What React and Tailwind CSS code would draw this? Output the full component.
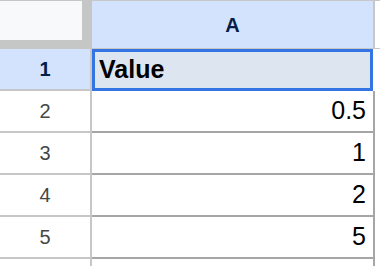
import React from "react";

const rows = [
  { n: "1", v: "Value", sel: true },
  { n: "2", v: "0.5" },
  { n: "3", v: "1" },
  { n: "4", v: "2" },
  { n: "5", v: "5" },
  { n: "", v: "" },
];

export default function App() {
  return (
    <div className="w-[380px] h-[266px] overflow-hidden bg-white font-['Liberation_Sans',Arial,sans-serif]">
      <div className="flex h-[49px]">
        <div className="w-[92px] h-[49px] bg-[#c4c7c5] shrink-0">
          <div className="w-[82px] h-[39px] mt-[1px] bg-[#f8f9fa]" />
        </div>
        <div className="w-[283px] h-[49px] shrink-0 border-t border-b border-r-2 border-[#c7c7c7] bg-[#d3e3fd] flex items-center justify-center text-[20px] font-bold text-[#041e49]">
          A
        </div>
        <div className="flex-1 h-[49px] border-t border-b border-[#c7c7c7] bg-white" />
      </div>
      {rows.map((r, i) => (
        <div key={i} className="flex h-[42px]">
          <div
            className={
              r.sel
                ? "w-[92px] h-[42px] shrink-0 border-r-2 border-b-2 border-[#c7c7c7] bg-[#d3e3fd] flex items-center justify-center text-[20px] font-bold text-[#041e49]"
                : "w-[92px] h-[42px] shrink-0 border-r-2 border-b-2 border-[#c7c7c7] bg-white flex items-center justify-center text-[20px] text-[#444746]"
            }
          >
            {r.n}
          </div>
          {r.sel ? (
            <div className="w-[283px] h-[42px] shrink-0 bg-white">
              <div className="w-[281px] h-[42px] border-[3px] border-[#3574e3] bg-[#dde6f0] flex items-center pl-[4px] text-[25px] font-bold text-black">
                {r.v}
              </div>
            </div>
          ) : (
            <div className="w-[283px] h-[42px] shrink-0 border-r-2 border-b-2 border-[#a6a6a6] bg-white flex items-center justify-end pr-[7px] text-[25px] text-black">
              {r.v}
            </div>
          )}
          <div className="flex-1 h-[42px] bg-white" />
        </div>
      ))}
    </div>
  );
}
